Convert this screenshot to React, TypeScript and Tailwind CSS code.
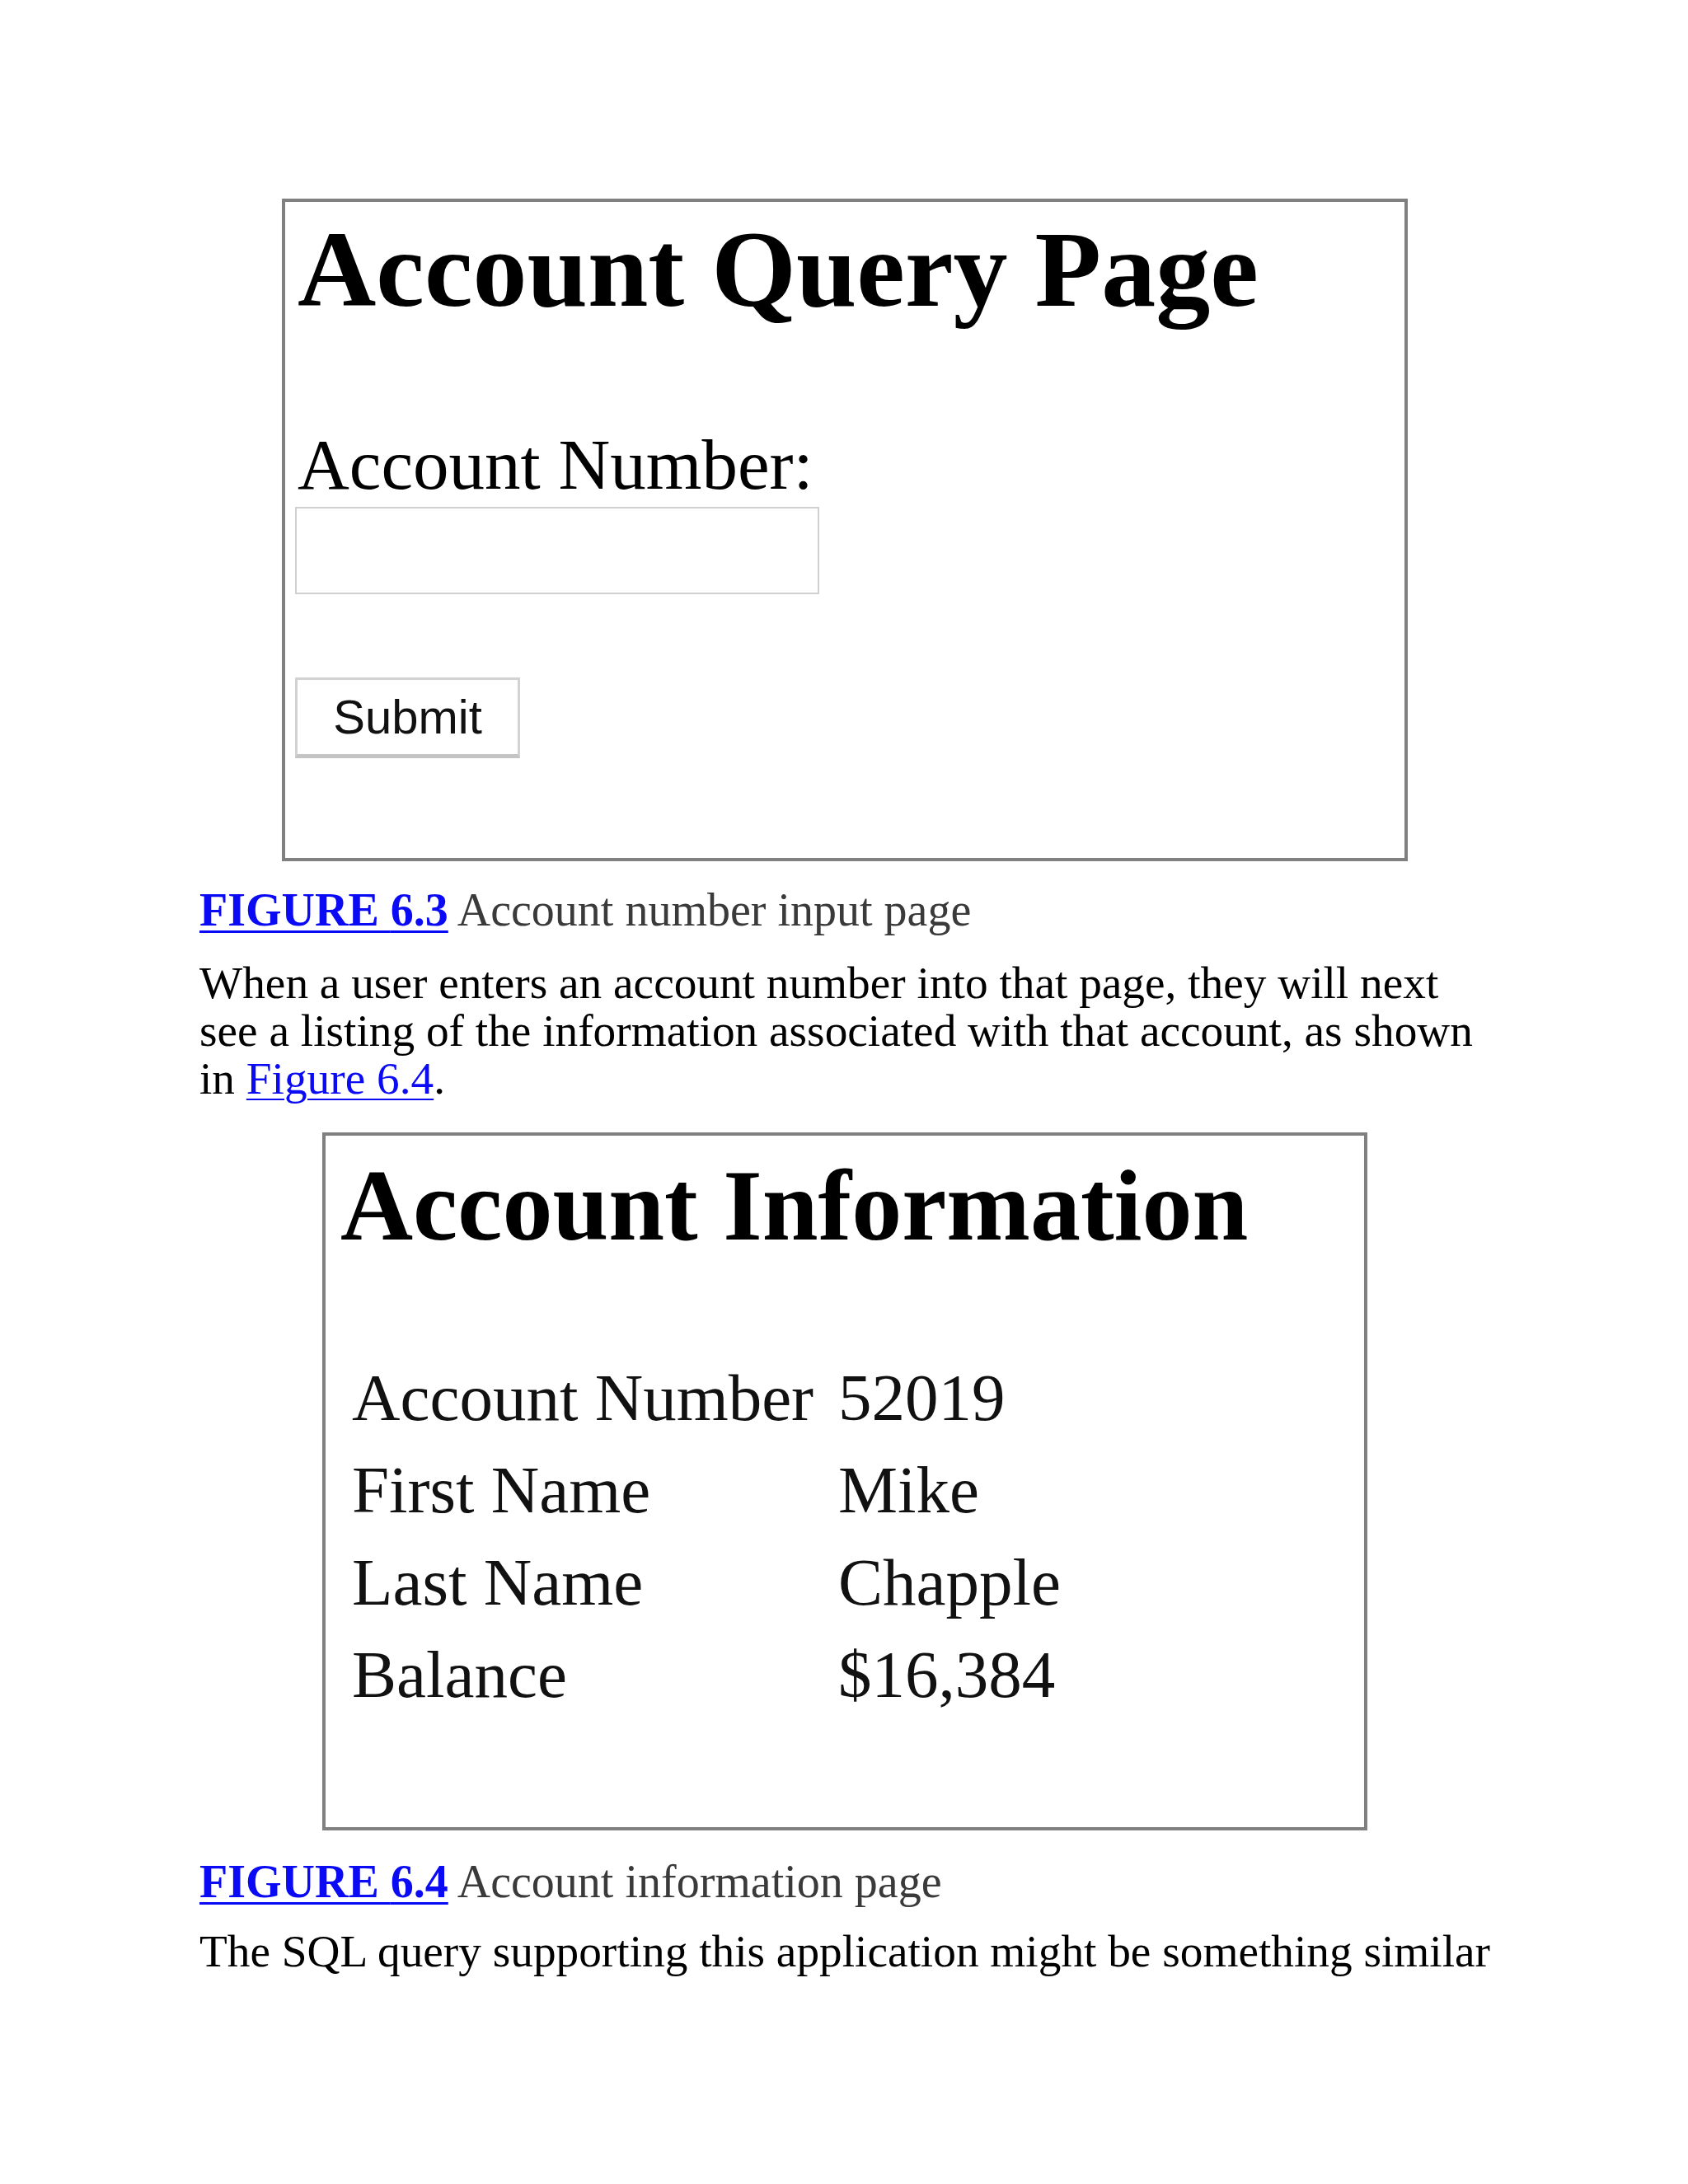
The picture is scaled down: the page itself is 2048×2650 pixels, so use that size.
const serif = { fontFamily: '"Liberation Serif", "Times New Roman", serif' }

function Caption({ num, text }: { num: string; text: string }) {
    return (
        <p className="text-[56px] leading-[58px]">
            <a href="#" className="font-bold text-[#0a0af5] underline decoration-[3px] underline-offset-[6px]">
                FIGURE {num}
            </a>{' '}
            <span className="text-[#3a3a3a]">{text}</span>
        </p>
    )
}

const rows = [
    ['Account Number', '52019'],
    ['First Name', 'Mike'],
    ['Last Name', 'Chapple'],
    ['Balance', '$16,384'],
]

export default function App() {
    return (
        <div className="min-h-[2650px] w-[2048px] bg-white text-black" style={serif}>
            <div className="w-[1580px] ml-[242px] pt-[241px]">
                {/* Figure 6.3: account query form */}
                <div className="ml-[100px] w-[1366px] h-[804px] border-4 border-[#808080] px-[15px] pt-[16px] flex flex-col items-start">
                    <h1 className="text-[132px] leading-none font-bold">Account Query Page</h1>
                    <label className="mt-[127px] text-[87px] leading-none">Account Number:</label>
                    <input
                        type="text"
                        className="mt-[8px] -ml-[3px] w-[636px] h-[106px] border-2 border-[#d0d0d0] bg-white outline-none"
                    />
                    <button
                        type="button"
                        className="mt-[101px] -ml-[3px] w-[273px] h-[98px] border-[3px] border-b-[5px] border-[#d2d2d2] border-b-[#c4c4c4] bg-white text-[58px] leading-none text-[#111]"
                        style={{ fontFamily: '"Liberation Sans", Arial, sans-serif' }}
                    >
                        Submit
                    </button>
                </div>

                <div className="mt-[30px]">
                    <Caption num="6.3" text="Account number input page" />
                </div>

                <p className="mt-[31px] text-[55.3px] leading-[58px]">
                    When a user enters an account number into that page, they will next see a listing of the
                    information associated with that account, as shown in{' '}
                    <a href="#" className="text-[#0a0af5] underline decoration-2 underline-offset-[6px]">
                        Figure 6.4
                    </a>
                    .
                </p>

                {/* Figure 6.4: account information */}
                <div className="mt-[36px] ml-[149px] w-[1268px] h-[847px] border-4 border-[#808080] pl-[18px] pt-[24px]">
                    <h1 className="text-[122px] leading-none font-bold">Account Information</h1>
                    <div className="mt-[116px] ml-[14px] grid grid-cols-[590px_1fr] text-[81px] leading-[112px] text-[#111]">
                        {rows.map(([k, v]) => (
                            <div key={k} className="contents">
                                <span>{k}</span>
                                <span>{v}</span>
                            </div>
                        ))}
                    </div>
                </div>

                <div className="mt-[33px]">
                    <Caption num="6.4" text="Account information page" />
                </div>

                <p className="mt-[27px] text-[55.3px] leading-[58px] whitespace-nowrap">
                    The SQL query supporting this application might be something similar
                </p>
            </div>
        </div>
    )
}
